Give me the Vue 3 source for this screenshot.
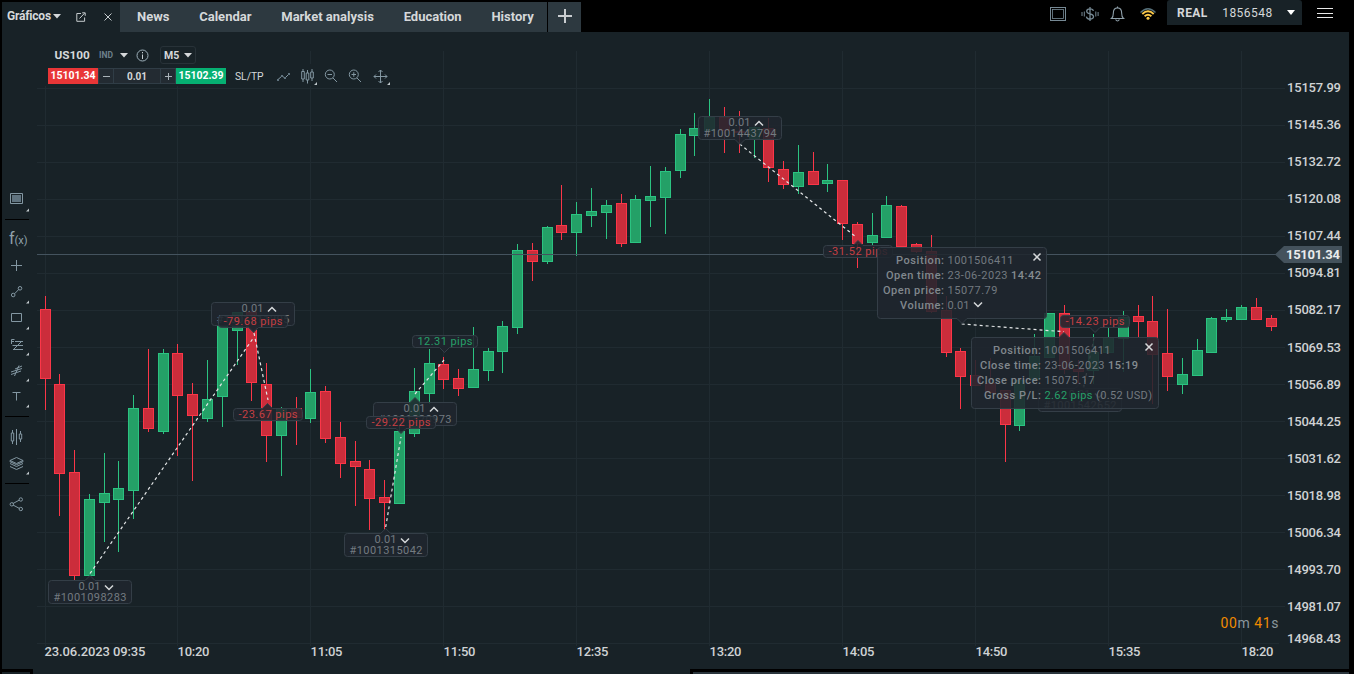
<template>
  <div class="terminal">
    <header class="header">
      <div class="tab-active">
        <span class="tab-title">Gráficos</span>
        <svg class="caret" width="8" height="5"><path d="M0 0h8l-4 4.500z" /></svg>
        <svg class="icon external" width="10" height="10" viewBox="0 0 10 10">
          <path d="M5 1.5H.8v7.8h7.8V5.5M3.5 6.5 8.6 1.2M6.2.8h3v3" />
        </svg>
        <svg class="icon close" width="8" height="8" viewBox="0 0 8 8"><path d="M.5.5l7 7M7.5.5l-7 7" /></svg>
      </div>
      <nav class="tabs">
        <a v-for="tab in tabs" :key="tab" class="tab">{{ tab }}</a>
      </nav>
      <div class="tab-add">
        <svg width="14" height="14"><path d="M7 0v14M0 7h14" stroke="#c9cdd0" stroke-width="2" /></svg>
      </div>
      <div class="header-icons">
        <svg width="110" height="26" viewBox="1049 0 110 26" fill="none" stroke="#768994">
          <rect x="1050.5" y="7.5" width="15" height="13" />
          <rect x="1052.5" y="9.5" width="11" height="9" stroke-width=".8" />
          <path d="M1093.4 10.8c-.3-1.4-1.6-2-3.4-2-2 0-3.3.9-3.3 2.4 0 3.6 6.8 1.8 6.8 5.4 0 1.6-1.4 2.5-3.5 2.5s-3.4-.9-3.6-2.5M1090 7v14" stroke-width="1.3" />
          <path d="M1084.3 11.5v5M1082 12v4M1095.8 11.5v5M1098.1 12v4" />
          <path d="M1111.5 18.5h12c-1.6-1.2-1.8-2-1.8-5 0-3.500-1.400-5.600-4.200-5.600s-4.200 2.100-4.200 5.600c0 3-.2 3.800-1.800 5zM1115.600 19.500q1.900 3 3.800 0M1117.500 6.500v1.500" stroke="#8fa0aa" stroke-width="1.100" />
          <path d="M1140.500 12.500q7.500-7.500 15 0" stroke="#56707a" stroke-width="1.300" />
          <path d="M1142.300 14q5.700-5.400 11.400 0M1144.600 16.300q3.400-3 6.800 0" stroke="#fbc94a" stroke-width="1.900" />
          <circle cx="1148" cy="18.300" r="1.500" fill="#fbc94a" stroke="none" />
        </svg>
      </div>
      <div class="account">
        <b>REAL</b>
        <span>1856548</span>
        <svg width="8" height="5"><path d="M0 0h8l-4 5z" fill="#fff" /></svg>
      </div>
      <div class="burger"><i></i><i></i><i></i></div>
    </header>

    <main class="workspace">
      <aside class="sidebar">
        <template v-for="(group, g) in tools" :key="g">
          <div v-if="g" class="divider" :class="'divider-' + g"></div>
          <svg v-for="tool in group" :key="tool.y" class="tool" width="35" height="26" :viewBox="`2 ${tool.y} 35 26`">
            <path v-if="tool.fill" :d="tool.fill" class="solid" />
            <path v-if="tool.d" :d="tool.d" />
            <text v-if="tool.fx" x="9" y="244"><tspan class="fx-big">f</tspan><tspan>(x)</tspan></text>
            <path v-if="tool.more" :d="`M29 ${tool.y + 22.500}v3h-3z`" class="more" />
          </svg>
        </template>
      </aside>

      <section class="chart-area">
        <svg class="chart" width="1312" height="637" viewBox="37 32 1312 637">
          <g class="grid">
            <path v-for="y in gridY" :key="'h' + y" :d="`M37 ${y + 0.5}H${y === 643 ? 1279 : 1285}`" />
            <path v-for="(t, i) in times" :key="'v' + i" :d="`M${t.grid + 0.5} ${i < 2 ? 86 : 51}V646`" />
          </g>
          <rect x="48" y="64" width="345" height="22" fill="#182227" />

          <g v-for="(c, i) in candles" :key="i" :class="c[0] === 'g' ? 'up' : 'down'">
            <path :d="`M${candleX(i) + 5.5} ${c[1]}V${c[4]}`" />
            <rect :x="candleX(i) + 0.5" :y="c[2] + 0.5" width="10" :height="Math.max(c[3] - c[2] - 1, 1)" />
          </g>

          <path d="M37 254.500H1277" stroke="#44535e" />
          <path v-for="d in trades" :key="d" :d="d" class="trade" />

          <g v-for="(m, i) in markers" :key="'m' + i">
            <path class="bubble" :d="bubble(m)" />
            <template v-if="m.pips">
              <text :x="m.x + m.w / 2" :y="m.y + 9.800" :textLength="m.w - 11" :class="m.pips[0] === '-' ? 'loss' : 'profit'" text-anchor="middle">{{ m.pips }}</text>
            </template>
            <template v-else-if="m.id">
              <text :x="m.x + 30.500" :y="m.y + 10" textLength="22">0.01</text>
              <text :x="m.x + 5.500" :y="m.y + 21" textLength="73">{{ m.id }}</text>
              <path class="chevron" :d="m.up ? `M${m.x + 57} ${m.y + 9.500}l4-4 4 4` : `M${m.x + 57} ${m.y + 5.500}l4 4 4-4`" />
            </template>
            <template v-else>
              <g v-for="(row, r) in m.rows" :key="r">
                <text class="label" :x="m.labelX" :y="m.y + 17 + r * 15" :textLength="row.lw" text-anchor="end">{{ row.label }}</text>
                <text :x="m.valueX" :y="m.y + 17 + r * 15" :textLength="row.vw" :class="{ profit: row.good }">{{ row.value }}</text>
                <text v-if="row.extra" :x="row.ex" :y="m.y + 17 + r * 15" :textLength="row.ew" :class="{ time: !row.good }">{{ row.extra }}</text>
              </g>
              <path class="chevron" :d="`M${m.x + m.w - 13.500} ${m.y + 6.500}l7 7m0-7l-7 7`" />
              <path v-if="!m.up" class="chevron" :d="`M${m.x + 97} ${m.y + 55.500}l4 4 4-4`" />
            </template>
          </g>

          <g class="axis">
            <text v-for="p in prices" :key="p[0]" x="1287" :y="p[1] + 4" textLength="54">{{ p[0] }}</text>
            <text v-for="t in times" :key="t.text" :x="t.x - 0.500" y="656" :textLength="t.w || 32">{{ t.text }}</text>
          </g>
          <path d="M1275 254.500l9-8.500h58v17h-58z" fill="#44525c" />
          <text class="current" x="1286" y="259" textLength="54">15101.34</text>
          <text class="countdown" x="1220.500" y="628" textLength="58"><tspan>00</tspan>m <tspan>41</tspan>s</text>
        </svg>

        <div class="toolbar">
          <div class="row row-symbol">
            <b class="symbol">US100</b>
            <span class="kind">IND</span>
            <svg class="kind-caret" width="8" height="5"><path d="M0 0h8l-4 4.500z" fill="#d5d8da" /></svg>
            <svg class="info" width="13" height="13" viewBox="0 0 13 13">
              <circle cx="6.500" cy="6.500" r="5.500" fill="none" stroke="#9db0ba" />
              <path d="M6.500 5.500v4.500M6.500 3v1.300" stroke="#c5ced3" />
            </svg>
            <div class="period">M5<svg width="8" height="5"><path d="M0 0h8l-4 4.500z" fill="#d5d8da" /></svg></div>
          </div>
          <div class="row">
            <div class="price sell">15101.34</div>
            <div class="step"><svg width="9" height="9"><path d="M1 4.500h7" stroke="#aab3b9" /></svg></div>
            <div class="amount">0.01</div>
            <div class="step"><svg width="9" height="9"><path d="M1 4.500h7M4.500 1v7" stroke="#aab3b9" /></svg></div>
            <div class="price buy">15102.39</div>
            <span class="sltp">SL/TP</span>
            <svg class="chart-tools" width="118" height="18" viewBox="275 67 118 18">
              <path d="M278 79.500l4-3.500 3 2 4-4" />
              <path d="M277 79h2v2h-2zM281 75h2v2h-2zM284 77h2v2h-2zM288 73h2v2h-2z" class="solid" />
              <path d="M303 69v2.500M303 79v3M307.500 70v3M307.500 80v3.500M312 69v3M312 78v3M301.700 71.500h2.600V79h-2.600zM306.200 73h2.600v7h-2.600zM310.700 72h2.600v6h-2.600z" />
              <circle cx="329.800" cy="74.500" r="4.500" />
              <path d="M333 78l4 4M327.500 74.500h4.500" />
              <circle cx="353.800" cy="74.500" r="4.500" />
              <path d="M357 78l4 4M351.500 74.500h4.500M353.800 72.200v4.600" />
              <path d="M380.500 70v13M374 76.500h13M378.500 72l2-2 2 2M378.500 81l2 2 2-2M376 74.500l-2 2 2 2M385 74.500l2 2-2 2" />
              <path d="M317 82v3h-3zM390 82v3h-3z" class="more" />
            </svg>
          </div>
        </div>
      </section>
    </main>

    <footer class="footer">
      <div class="footer-corner"></div>
      <div class="footer-left"></div>
      <div class="footer-right"></div>
    </footer>
  </div>
</template>

<script setup>
const tabs = ['News', 'Calendar', 'Market analysis', 'Education', 'History'];

const tools = [
  [{ y: 186, more: true, d: 'M10.500 193.500h12v10h-12z', fill: 'M12 195h9v7h-9z' }],
  [
    { y: 226, fx: true },
    { y: 252, d: 'M16.500 260v11M11 265.500h11' },
    { y: 278, more: true, d: 'M14.500 293.800l4.500-4.600M15 295a1.800 1.800 0 1 1-3.600 0 1.800 1.800 0 0 1 3.600 0M21.800 288.300a1.800 1.800 0 1 1-3.600 0 1.800 1.800 0 0 1 3.600 0' },
    { y: 304, more: true, d: 'M11.500 313.500h10v8h-10z' },
    { y: 330, more: true, d: 'M11.500 344v-4.500h3M11.500 341.500h2.500M15 341.500h8M12.500 345.500h10.500M13 349.500h10M21.500 341.500l-8 8' },
    { y: 356, more: true, d: 'M15 369l7-3M11 372l11-3.500M11 374.500l10-3.500M14.500 376l4.500-10.500' },
    { y: 382, more: true, d: 'M12.500 392.500h8M16.500 392.500v8' },
  ],
  [
    { y: 423, d: 'M16.500 429v16M12.500 430v3M12.500 441v3M11.300 433h2.400v8h-2.400zM20.500 431v3M20.500 439v3M19.300 434h2.400v5h-2.400z' },
    { y: 449, more: true, d: 'M16.500 457.500l6.500 3-6.500 3-6.500-3zM10 463.500l6.500 3 6.500-3M10 466.500l6.500 3 6.500-3M10 460.500v1.200l6.500 3 6.500-3v-1.200' },
  ],
  [{ y: 491, d: 'M13 503.500l6.500-3.500M13 505l6.500 3.500M13.500 504.300a1.700 1.700 0 1 1-3.400 0 1.700 1.700 0 0 1 3.400 0M22.500 499.500a1.700 1.700 0 1 1-3.400 0 1.700 1.700 0 0 1 3.400 0M22.500 509a1.700 1.700 0 1 1-3.400 0 1.700 1.700 0 0 1 3.400 0' }],
];

const gridY = Array.from({ length: 16 }, (_, i) => 88 + i * 37);

const prices = [
  ['15157.99', 88], ['15145.36', 125], ['15132.72', 162], ['15120.08', 199],
  ['15107.44', 236], ['15094.81', 273], ['15082.17', 310], ['15069.53', 348],
  ['15056.89', 385], ['15044.25', 422], ['15031.62', 459], ['15018.98', 496],
  ['15006.34', 533], ['14993.70', 570], ['14981.07', 607], ['14968.43', 639],
];

const times = [
  { text: '23.06.2023 09:35', x: 45, w: 101, grid: 45 },
  { text: '10:20', x: 178, grid: 177 },
  { text: '11:05', x: 311, grid: 310 },
  { text: '11:50', x: 444, grid: 443 },
  { text: '12:35', x: 577, grid: 576 },
  { text: '13:20', x: 710, grid: 709 },
  { text: '14:05', x: 843, grid: 842 },
  { text: '14:50', x: 976, grid: 975 },
  { text: '15:35', x: 1109, grid: 1108 },
  { text: '18:20', x: 1242, grid: 1241 },
];

// colour, high, body top, body bottom, low
const candles = [
  ['r', 296, 309, 379, 410], ['r', 374, 384, 474, 516], ['r', 450, 472, 576, 580], ['g', 494, 499, 576, 576],
  ['g', 453, 493, 503, 542], ['g', 461, 488, 500, 552], ['g', 395, 408, 491, 519], ['r', 349, 408, 429, 432],
  ['g', 349, 353, 432, 434], ['r', 344, 353, 396, 456], ['r', 383, 394, 416, 481], ['g', 360, 399, 419, 422],
  ['g', 325, 325, 397, 427], ['g', 312, 312, 331, 365], ['r', 311, 312, 383, 401], ['r', 363, 384, 436, 462],
  ['g', 407, 408, 436, 476], ['r', 397, 408, 418, 445], ['g', 369, 392, 419, 423], ['r', 386, 391, 439, 443],
  ['r', 422, 437, 464, 478], ['r', 441, 461, 467, 506], ['r', 460, 469, 499, 530], ['r', 480, 497, 503, 530],
  ['g', 425, 431, 504, 504], ['g', 368, 391, 434, 437], ['g', 349, 363, 394, 404], ['r', 357, 364, 380, 389],
  ['r', 369, 378, 389, 396], ['g', 327, 369, 388, 388], ['g', 348, 351, 371, 381], ['g', 321, 326, 352, 373],
  ['g', 244, 250, 328, 334], ['r', 243, 250, 262, 281], ['g', 226, 227, 262, 264], ['r', 185, 225, 233, 240],
  ['g', 202, 214, 233, 256], ['g', 188, 211, 216, 227], ['g', 200, 205, 213, 239], ['r', 194, 203, 244, 247],
  ['g', 195, 199, 243, 243], ['g', 166, 196, 201, 227], ['g', 167, 171, 198, 234], ['g', 129, 134, 171, 178],
  ['g', 113, 128, 136, 156], ['g', 99, 117, 131, 131], ['r', 107, 117, 131, 153], ['r', 111, 131, 133, 153],
  ['g', 126, 127, 139, 158], ['r', 118, 128, 168, 182], ['r', 161, 169, 185, 189], ['g', 145, 172, 187, 194],
  ['r', 152, 171, 185, 185], ['g', 164, 180, 184, 192], ['r', 180, 180, 224, 240], ['r', 222, 224, 244, 268],
  ['g', 213, 235, 243, 245], ['g', 196, 205, 238, 238], ['r', 205, 206, 247, 247], ['r', 243, 244, 252, 253],
  ['r', 235, 251, 312, 313], ['r', 296, 310, 353, 357], ['r', 348, 351, 377, 409], ['r', 360, 375, 386, 386],
  ['r', 358, 383, 393, 393], ['r', 390, 390, 425, 462], ['g', 380, 380, 426, 431], ['g', 334, 356, 380, 380],
  ['g', 313, 313, 358, 358], ['r', 305, 313, 370, 374], ['r', 360, 369, 372, 384], ['g', 334, 352, 371, 384],
  ['g', 327, 337, 353, 353], ['g', 311, 317, 339, 372], ['r', 305, 316, 322, 337], ['r', 296, 321, 355, 404],
  ['r', 309, 353, 377, 391], ['g', 358, 374, 385, 394], ['g', 339, 350, 376, 376], ['g', 317, 318, 353, 353],
  ['g', 309, 317, 320, 322], ['g', 305, 307, 320, 320], ['r', 298, 307, 320, 320], ['r', 315, 318, 327, 331],
];

const candleX = (i) => Math.floor(40 + i * 14.7711);

const trades = [
  'M90 573.500L254 337',
  'M254 333L268 400',
  'M385.700 527L401 437',
  'M415 394L444 360',
  'M739.700 144L856 237',
  'M961.700 324L1064 331.700',
  'M1094 338L1083 390',
];

// px is the arrow tip, tipTop / tipBottom say which edge it grows from
const markers = [
  { x: 48, y: 580, w: 84, h: 24, px: 90, id: '#1001098283' },
  { x: 211, y: 302, w: 84, h: 24, px: 253.5, up: true, id: '#1001211295' },
  { x: 218, y: 315, w: 70, h: 13, px: 253.5, up: true, pips: '-79.68 pips' },
  { x: 233, y: 408, w: 70, h: 13, px: 267.5, pips: '-23.67 pips' },
  { x: 344, y: 533, w: 84, h: 24, px: 385.7, id: '#1001315042' },
  { x: 412, y: 335, w: 66, h: 13, px: 444.5, up: true, pips: '12.31 pips' },
  { x: 373, y: 402, w: 84, h: 24, px: 415, tipTop: true, up: true, id: '#1001320973' },
  { x: 366, y: 416, w: 70, h: 13, px: 401, up: true, pips: '-29.22 pips' },
  { x: 698, y: 116, w: 84, h: 24, px: 740, up: true, id: '#1001443794' },
  { x: 823, y: 245, w: 70, h: 13, px: 858, pips: '-31.52 pips' },
  {
    x: 877, y: 247, w: 170, h: 72, px: 962, tipBottom: true, labelX: 944, valueX: 947.5,
    rows: [
      { label: 'Position:', lw: 48, value: '1001506411', vw: 66 },
      { label: 'Open time:', lw: 58, value: '23-06-2023', vw: 60, extra: '14:42', ex: 1011, ew: 30 },
      { label: 'Open price:', lw: 61, value: '15077.79', vw: 50 },
      { label: 'Volume:', lw: 44, value: '0.01', vw: 22 },
    ],
  },
  { x: 1060, y: 315, w: 70, h: 13, px: 1095, up: true, pips: '-14.23 pips' },
  { x: 1038, y: 388, w: 84, h: 24, px: 1080, id: '#1001542652' },
  {
    x: 971, y: 337, w: 188, h: 72, px: 1064, tipTop: true, up: true, labelX: 1041, valueX: 1044.5,
    rows: [
      { label: 'Position:', lw: 48, value: '1001506411', vw: 66 },
      { label: 'Close time:', lw: 61, value: '23-06-2023', vw: 60, extra: '15:19', ex: 1108, ew: 30 },
      { label: 'Close price:', lw: 64, value: '15075.17', vw: 50 },
      { label: 'Gross P/L:', lw: 57, value: '2.62 pips', vw: 48, good: true, extra: '(0.52 USD)', ex: 1096, ew: 56 },
    ],
  },
];

const bubble = (m) => {
  const top = m.tipTop || (!m.up && !m.tipBottom);
  const x = m.x + 0.5;
  const y = m.y + 0.5;
  const w = m.w - 1;
  const h = m.h - 1;
  const upper = top ? `H${m.px - 5}L${m.px} ${y - 5}L${m.px + 5} ${y}` : '';
  const lower = top ? '' : `H${m.px + 5}L${m.px} ${y + h + 5}L${m.px - 5} ${y + h}`;
  return `M${x + 3} ${y}${upper}H${x + w - 3}q3 0 3 3V${y + h - 3}q0 3-3 3${lower}H${x + 3}q-3 0-3-3V${y + 3}q0-3 3-3z`;
};
</script>

<style>
body {
  background: #000;
  overflow: hidden;
}
</style>

<style scoped>
.terminal {
  width: 1354px;
  height: 674px;
  background: #000;
  font-family: Roboto, sans-serif;
  color: #d5d8da;
  display: flex;
  flex-direction: column;
}

svg {
  display: block;
  flex: none;
}

.header {
  height: 32px;
  display: flex;
  padding-left: 2px;
  box-sizing: border-box;
}

.tab-active {
  width: 118px;
  height: 30px;
  margin-top: 2px;
  background: #182227;
  display: flex;
  align-items: center;
  box-sizing: border-box;
  padding: 0 8px 2px 5px;
}

.tab-title {
  font-size: 12px;
  font-weight: 700;
  width: 46px;
  letter-spacing: -0.2px;
}

.caret { fill: #d5d8da; }
.icon { fill: none; stroke: #c5cbce; }
.external { margin: 2px 18px 0 15px; }
.close { margin-top: 2px; }

.tabs {
  width: 427px;
  height: 30px;
  margin-top: 2px;
  background: #2d3940;
  display: flex;
  align-items: center;
  gap: 29.8px;
  padding: 0 0 1px 17px;
  box-sizing: border-box;
}

.tab {
  font-size: 13px;
  font-weight: 700;
  white-space: nowrap;
}

.tab-add {
  width: 33px;
  height: 30px;
  margin: 2px 0 0 1px;
  background: #2d3940;
  display: flex;
  align-items: center;
  justify-content: center;
  box-sizing: border-box;
  padding-bottom: 2px;
}

.header-icons { margin-left: auto; }

.account {
  width: 135px;
  height: 25px;
  margin-left: 8px;
  background: #182227;
  border-radius: 3px 3px 0 0;
  display: flex;
  align-items: center;
  box-sizing: border-box;
  padding: 0 7px 0 10px;
  font-size: 12px;
  justify-content: space-between;
  letter-spacing: 0.45px;
}

.burger {
  width: 16px;
  height: 10px;
  margin: 8px 21px 0 15px;
  display: flex;
  flex-direction: column;
  justify-content: space-between;
}

.burger i {
  height: 1px;
  background: #e8e8e8;
}

.workspace {
  height: 637px;
  width: 1347px;
  margin-left: 2px;
  background: #182227;
  display: flex;
}

.sidebar {
  width: 35px;
  padding-top: 154px;
  box-sizing: border-box;
}

.tool {
  fill: none;
  stroke: #8397a2;
}

.tool text {
  fill: #8fa1ab;
  stroke: none;
  font-size: 11px;
}

.tool .fx-big { font-size: 16px; }
.solid { fill: #60737f; stroke: none; }
.more { fill: #c0c8cc; stroke: none; }

.divider {
  width: 24px;
  height: 1px;
  background: #000;
  margin: 8px 0 7px 3px;
}

.divider-1 { margin: 7px 0 6px 3px; }
.divider-2 { margin-bottom: 6px; }

.chart-area { position: relative; }

.grid path { stroke: #202b31; }
.up path { stroke: #2bc381; }
.up rect { stroke: #2bc381; fill: #24a067; }
.down path { stroke: #fb3648; }
.down rect { stroke: #fb3648; fill: #cb2d3b; }

.trade {
  fill: none;
  stroke: #e4e7e8;
  stroke-width: 1.2;
  stroke-dasharray: 3 3;
}

.chart text {
  font-size: 11px;
  fill: #737a80;
}

.bubble {
  fill: #1f262e;
  fill-opacity: 0.87;
  stroke: #343e47;
}

.chart .profit { fill: #26a069; }
.chart .loss { fill: #c53f43; }
.chart .label { font-weight: 500; fill: #81888d; }
.chart .time { font-weight: 500; fill: #868d92; }

.chevron {
  fill: none;
  stroke: #d5d8da;
  stroke-width: 1.5;
}

.chart .axis text {
  font-size: 13px;
  font-weight: 500;
  fill: #cfd2d4;
}

.chart .current {
  font-size: 13px;
  font-weight: 700;
  fill: #e9ebec;
}

.chart .countdown {
  font-size: 14px;
  fill: #8b969d;
}

.countdown tspan { fill: #f08a00; }

.toolbar {
  position: absolute;
  left: 11px;
  top: 13px;
}

.row {
  display: flex;
  align-items: center;
  height: 16px;
}

.row-symbol {
  height: 20px;
  padding-left: 6.5px;
  margin-bottom: 3px;
}

.symbol {
  font-size: 11.8px;
  width: 44.5px;
}

.kind {
  font-size: 8.5px;
  font-weight: 700;
  color: #6d808b;
  width: 21px;
}

.info { margin: 0 11px 0 8px; }

.period {
  display: flex;
  align-items: center;
  gap: 5px;
  width: 36px;
  height: 18px;
  padding-left: 3px;
  box-sizing: border-box;
  border: 1px solid #283238;
  border-radius: 3px;
  font-size: 10.5px;
  font-weight: 700;
}

.price {
  width: 50px;
  height: 16px;
  line-height: 16px;
  text-align: center;
  font-size: 10.5px;
  font-weight: 700;
  color: #fff;
}

.sell { background: #e93637; }
.buy { background: #06b072; }

.step,
.amount {
  height: 16px;
  width: 16px;
  box-sizing: border-box;
  background: #232b32;
  border: 1px solid #303d46;
  display: flex;
  align-items: center;
  justify-content: center;
}

.amount {
  width: 46px;
  border-width: 1px 0;
  font-size: 10px;
  font-weight: 700;
}

.sltp {
  font-size: 10.3px;
  width: 40px;
  margin-left: 9px;
}

.chart-tools {
  fill: none;
  stroke: #8397a2;
}

.footer {
  height: 5px;
  display: flex;
  padding: 0 5px 0 2px;
  background: #000;
}

.footer-corner {
  width: 28px;
  height: 2px;
  margin-top: 3px;
  background: #182227;
}

.footer-left {
  width: 657px;
  margin-left: 3px;
  background: #182227;
}

.footer-right {
  width: 656px;
  height: 2px;
  margin: 3px 0 0 auto;
  background: #2a353c;
}
</style>
